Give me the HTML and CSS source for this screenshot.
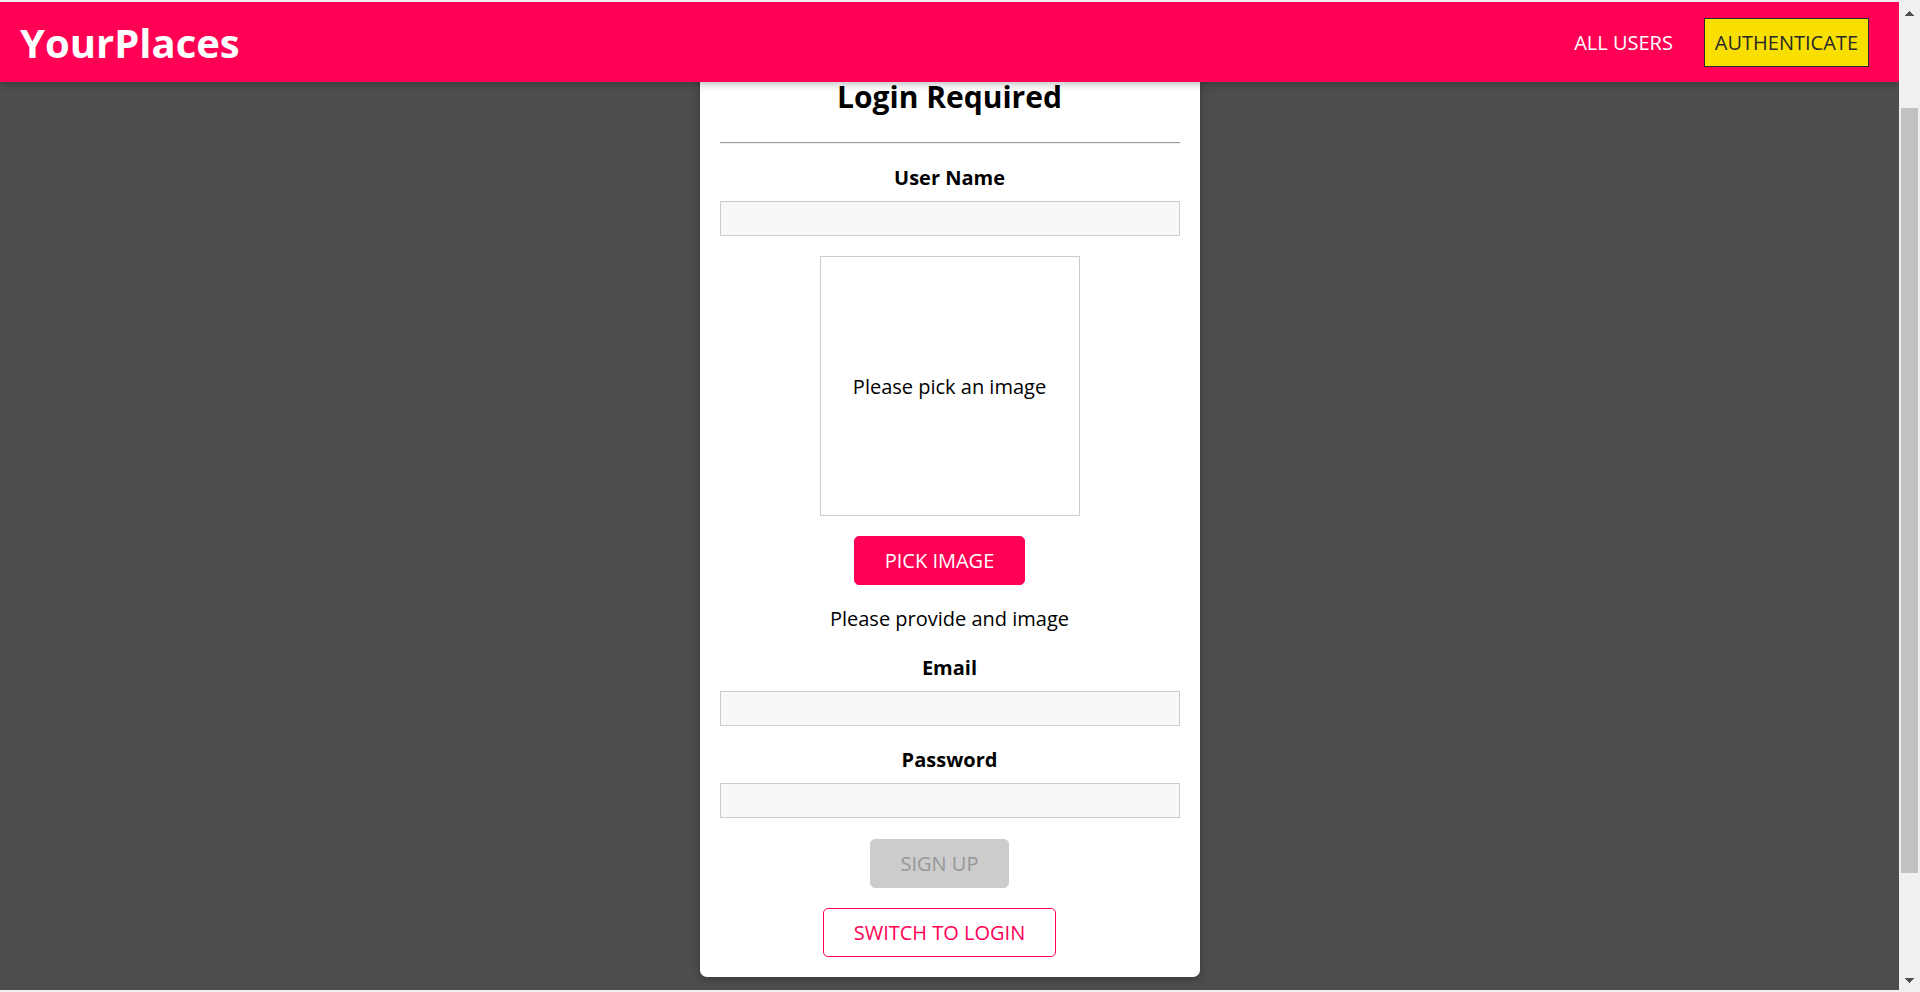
FILE: index.html
```html
<!DOCTYPE html>
<html>
<head>
<meta charset="utf-8">
<title>YourPlaces</title>
<link rel="stylesheet" href="styles.css">
</head>
<body>

<div class="window">

<header class="main-header">
   <h1 class="main-header__title">YourPlaces</h1>
   <nav>
     <ul class="nav-links">
       <li><a href="#">ALL USERS</a></li>
       <li><a href="#" class="active">AUTHENTICATE</a></li>
     </ul>
   </nav>
</header>

<main>
  <div class="card authentication">
    <h2>Login Required</h2>
    <hr>
    <form>
      <div class="form-control">
        <label for="name">User Name</label>
        <input id="name" type="text">
      </div>
      <div class="form-control">
        <div class="image-upload">
          <div class="image-upload__preview">
            <p>Please pick an image</p>
          </div>
          <button type="button" class="button">PICK IMAGE</button>
        </div>
        <p class="error-text">Please provide and image</p>
      </div>
      <div class="form-control">
        <label for="email">Email</label>
        <input id="email" type="email">
      </div>
      <div class="form-control">
        <label for="password">Password</label>
        <input id="password" type="password">
      </div>
      <div class="form-actions">
        <button type="submit" class="button" disabled>SIGN UP</button>
      </div>
    </form>
    <div class="form-actions">
      <button type="button" class="button button--inverse">SWITCH TO LOGIN</button>
    </div>
  </div>
</main>

</div>

<!-- window scrollbar, page is scrolled down a bit -->
<div class="scrollbar">
  <span class="scrollbar__arrow scrollbar__arrow--up"></span>
  <span class="scrollbar__thumb"></span>
  <span class="scrollbar__arrow scrollbar__arrow--down"></span>
</div>

</body>
</html>
```

FILE: styles.css
```css
* {
    box-sizing: border-box;
}

html, body {
    margin: 0;
    height: 100%;
    overflow: hidden;
}

body {
    display: flex;
    background: #f0f0f0;
    font-family: "Open Sans", "Liberation Sans", sans-serif;
    font-size: 20px;
}

/* browser frame leaves a 2px strip top and bottom */
.window {
    position: relative;
    flex: 1;
    margin: 2px 0;
    overflow: hidden;
    background: #4d4d4d;
}

.scrollbar {
    width: 21px;
    display: flex;
    flex-direction: column;
    align-items: center;
    background: #f0f0f0;
}

.scrollbar__arrow {
    width: 9px;
    height: 5px;
}
.scrollbar__arrow--up {
    margin-top: 11px;
    background: conic-gradient(from 138deg at 50% 0, #505050 84deg, transparent 0);
}
.scrollbar__arrow--down {
    margin-top: auto;
    margin-bottom: 9px;
    background: conic-gradient(from -42deg at 50% 100%, #505050 84deg, transparent 0);
}

.scrollbar__thumb {
    width: 17px;
    height: 765px;
    margin-top: 92px;
    background: #c1c1c1;
}

/* header */
.main-header {
    position: absolute;
    top: 0;
    left: 0;
    right: 0;
    height: 80px;
    z-index: 5;
    display: flex;
    align-items: center;
    justify-content: space-between;
    padding: 0 20px;
    background: #ff0055;
    box-shadow: 0 2px 8px rgba(0, 0, 0, 0.26);
}

.main-header__title {
    margin: 0;
    color: white;
    font-size: 40px;
    font-weight: bold;
}

.nav-links {
    list-style: none;
    margin: 0;
    padding: 0;
    display: flex;
    align-items: center;
}

.nav-links li {
    margin: 0 10px;
}

.nav-links a {
    display: block;
    padding: 10px;
    border: 1px solid transparent;
    color: white;
    text-decoration: none;
}

.nav-links a.active {
    background: #f8df00;
    border-color: #292929;
    color: #292929;
}

/* card */
main {
    padding-top: 29px;
}

.card {
    background: white;
    border-radius: 7px;
    box-shadow: 0 2px 8px rgba(0, 0, 0, 0.26);
    padding: 20px;
}

.authentication {
    width: 500px;
    margin: 0 auto;
    text-align: center;
}

.authentication h2 {
    font-size: 30px;
    margin: 25px 0;
}

.authentication hr {
    margin: 0;
    border: 0;
    border-top: 1px solid #9a9a9a;
    border-bottom: 1px solid #eeeeee;
}

.form-control {
    margin: 20px 0;
}

.form-control label {
    display: block;
    font-weight: bold;
    margin-bottom: 10px;
}

.form-control input {
    display: block;
    width: 100%;
    font: inherit;
    border: 1px solid #ccc;
    background: #f8f8f8;
    padding: 3px 5px;
}

.image-upload {
    display: flex;
    flex-direction: column;
    align-items: center;
}

.image-upload__preview {
    width: 260px;
    height: 260px;
    border: 1px solid #ccc;
    display: flex;
    align-items: center;
    justify-content: center;
    margin-bottom: 20px;
}

.image-upload__preview p {
    margin: 0;
}

.error-text {
    margin: 20px 0 22px;
}

.form-actions {
    margin-top: 20px;
}

form .form-actions {
    margin-top: 21px;
}

.button {
    font: inherit;
    padding: 10px 30px;
    border: 1px solid #ff0055;
    border-radius: 5px;
    background: #ff0055;
    color: white;
    margin-right: 20px;
    display: inline-block;
    cursor: pointer;
}

.button:disabled {
    background: #ccc;
    color: #979797;
    border-color: #ccc;
    cursor: not-allowed;
}

.button--inverse {
    background: transparent;
    color: #ff0055;
}
```
